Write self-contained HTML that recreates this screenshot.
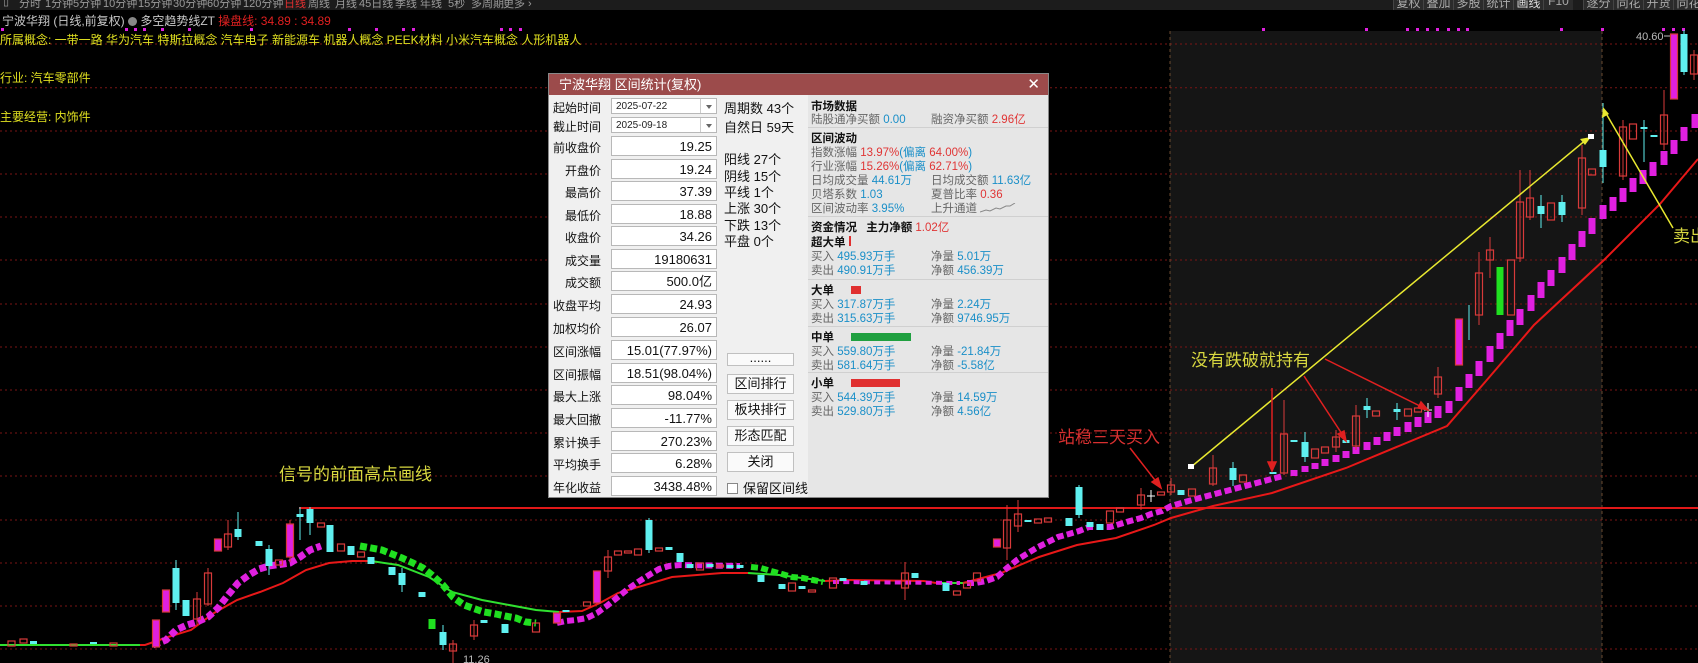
<!DOCTYPE html>
<html><head><meta charset="utf-8">
<style>
*{margin:0;padding:0;box-sizing:border-box}
body{width:1698px;height:663px;background:#000;overflow:hidden;position:relative;font-family:"Liberation Sans","Noto Sans CJK SC",sans-serif}
.a{position:absolute;white-space:nowrap}
#top{position:absolute;left:0;top:0;width:1698px;height:10px;background:#1c1c1c;overflow:hidden}
#top span{position:absolute;top:-5px;font-size:11px;color:#9a9a9a}
.tb{position:absolute;top:0;height:10px;background:#2b2b2b;border-left:1px solid #444;overflow:hidden;color:#aaa;font-size:12px;text-align:center;width:30px}
.tb i{position:absolute;top:-6px;left:0;right:0;font-style:normal}
#dlg{position:absolute;left:548px;top:73px;width:501px;height:425px;background:#f0f0f0;border:1px solid #888}
#dt{position:absolute;left:0;top:0;width:100%;height:21px;background:#9c4b4b;color:#fff;font-size:13px;line-height:21px;padding-left:10px}
#dt b{position:absolute;right:8px;top:0;font-weight:normal;font-size:15px}
.lb{position:absolute;left:2px;width:50px;text-align:right;font-size:12px;color:#111}
.bx{position:absolute;left:62px;width:106px;height:20px;background:#fff;border:1px solid #b8b8b8;font-size:13px;text-align:right;padding-right:4px;line-height:19px;color:#111}
.dd{position:absolute;left:62px;width:106px;height:16px;background:#fff;border:1px solid #b8b8b8;font-size:10px;line-height:15px;padding-left:4px;color:#222}
.dd:after{content:"";position:absolute;right:0;top:0;width:15px;height:14px;border-left:1px solid #ccc}
.dd:before{content:"";position:absolute;right:4px;top:6px;border:3px solid transparent;border-top:4px solid #666;z-index:1}
.mc{position:absolute;left:175px;font-size:13px;color:#111}
.bt{position:absolute;left:178px;width:67px;height:20px;background:#fafafa;border:1px solid #c0c0c0;font-size:13px;text-align:center;line-height:18px;color:#111}
#rp{position:absolute;left:259px;top:21px;width:240px;height:402px;background:#e6e6e6}
#rp .a{font-size:11.5px;color:#666}
#rp .h{color:#111;font-weight:bold}
.bl{color:#1a8fc8}.rd{color:#e03535}
.sep{position:absolute;left:0;width:240px;height:1px;background:#d0d0d0}
</style></head><body>
<svg width="1698" height="663" viewBox="0 0 1698 663" style="position:absolute;left:0;top:0">
<rect x="1170" y="31" width="432" height="632" fill="#151515"/>
<g stroke="#7a1515" stroke-width="1" stroke-dasharray="2 3">
<line x1="0" y1="44" x2="1698" y2="44"/><line x1="0" y1="87.7" x2="1698" y2="87.7"/><line x1="0" y1="131" x2="1698" y2="131"/><line x1="0" y1="174" x2="1698" y2="174"/><line x1="0" y1="217" x2="1698" y2="217"/><line x1="0" y1="260" x2="1698" y2="260"/><line x1="0" y1="304" x2="1698" y2="304"/><line x1="0" y1="347" x2="1698" y2="347"/><line x1="0" y1="390" x2="1698" y2="390"/><line x1="0" y1="433" x2="1698" y2="433"/><line x1="0" y1="476" x2="1698" y2="476"/><line x1="0" y1="520" x2="1698" y2="520"/><line x1="0" y1="563" x2="1698" y2="563"/><line x1="0" y1="606" x2="1698" y2="606"/><line x1="0" y1="649" x2="1698" y2="649"/>
</g>
<g stroke="#6a4a30" stroke-dasharray="3 3"><line x1="1170" y1="31" x2="1170" y2="663"/><line x1="1602" y1="31" x2="1602" y2="663"/></g>
<g fill="#e020e0">
<rect x="1" y="28" width="3" height="3"/><rect x="125" y="28" width="3" height="3"/><rect x="134" y="28" width="3" height="3"/><rect x="143" y="28" width="3" height="3"/><rect x="161" y="28" width="3" height="3"/><rect x="188" y="28" width="3" height="3"/><rect x="250" y="28" width="3" height="3"/><rect x="348" y="28" width="3" height="3"/><rect x="375" y="28" width="3" height="3"/><rect x="402" y="28" width="3" height="3"/><rect x="412" y="28" width="3" height="3"/><rect x="500" y="28" width="3" height="3"/><rect x="509" y="28" width="3" height="3"/><rect x="519" y="28" width="3" height="3"/><rect x="1262" y="28" width="3" height="3"/><rect x="1365" y="28" width="3" height="3"/><rect x="1406" y="28" width="3" height="3"/><rect x="1416" y="28" width="3" height="3"/><rect x="1426" y="28" width="3" height="3"/><rect x="1436" y="28" width="3" height="3"/><rect x="1447" y="28" width="3" height="3"/><rect x="1457" y="28" width="3" height="3"/><rect x="1466" y="28" width="3" height="3"/><rect x="1560" y="28" width="3" height="3"/><rect x="1601" y="28" width="3" height="3"/><rect x="1662" y="28" width="3" height="3"/><rect x="1672" y="28" width="3" height="3"/><rect x="1682" y="28" width="3" height="3"/>
</g>
<line x1="299" y1="508" x2="1698" y2="508" stroke="#e01818" stroke-width="2"/>
<polyline fill="none" stroke="#e81818" stroke-width="2" points="0,645 145,645 168,637 191,630 214,613 237,600 260,592 283,583 306,570 329,563 352,561 371,561"/>
<polyline fill="none" stroke="#30e030" stroke-width="2" points="371,561 398,565 429,577 452,592 482,600 536,610 559,612"/>
<polyline fill="none" stroke="#e81818" stroke-width="2" points="559,612 582,611 600,603 618,593 672,577 722,573 748,573"/>
<polyline fill="none" stroke="#30e030" stroke-width="2" points="748,573 779,575 825,581"/>
<polyline fill="none" stroke="#e81818" stroke-width="2" points="825,581 848,580 924,581 936,583"/>
<polyline fill="none" stroke="#30e030" stroke-width="2" points="936,583 963,583"/>
<polyline fill="none" stroke="#e81818" stroke-width="2" points="963,583 1001,573 1039,557 1077,545 1116,538 1154,525 1171,518 1213,506 1272,493 1346,468 1447,426 1486,381 1534,325 1604,260 1660,204 1698,159"/>
<polyline fill="none" stroke="#30e030" stroke-width="2" points="0,645 140,645"/>
<polyline fill="none" stroke="#e020e0" stroke-width="7" stroke-dasharray="7 3.3" points="153,645 166,640 176,630 187,625 197,622 208,617 218,608 228,595 238,583 249,575 259,569 269,566 290,563 300,557 310,550 321,546"/>
<polyline fill="none" stroke="#20e020" stroke-width="7" stroke-dasharray="7 3.3" points="360,546 382,550 392,554 402,558 413,563 423,568 432,575 443,585 453,597 464,605 475,609 484,612 496,614 505,616 516,618 526,622 536,623"/>
<polyline fill="none" stroke="#e020e0" stroke-width="6" stroke-dasharray="7 3.3" points="557,623 566,621 576,620 587,618 597,613 608,605 618,597 628,589 638,582 649,575 659,569 669,566 680,565 740,566"/>
<polyline fill="none" stroke="#20e020" stroke-width="6" stroke-dasharray="7 3.3" points="751,567 761,568 771,571 782,574 792,577 803,578 813,580 823,582"/>
<polyline fill="none" stroke="#e020e0" stroke-width="4" stroke-dasharray="6 4.3" points="833,582 960,583"/>
<polyline fill="none" stroke="#e020e0" stroke-width="6" stroke-dasharray="7 3.3" points="967,583 976,583 986,581 997,577 1007,568 1017,560 1028,553 1038,547 1048,542 1058,537 1069,534 1079,531 1089,527 1100,527 1110,527 1120,524 1130,521 1141,518 1151,514 1162,511 1171,506 1192,500 1230,490 1283,476"/>
<g fill="#e020e0">
<rect x="1290.5" y="470" width="7" height="6"/><rect x="1301.5" y="466" width="7" height="6"/><rect x="1311.5" y="463" width="7" height="6"/><rect x="1321.5" y="459" width="7" height="7"/><rect x="1332.5" y="455" width="7" height="7"/><rect x="1342.5" y="451" width="7" height="7"/><rect x="1352.5" y="447" width="7" height="7"/><rect x="1363.5" y="442" width="7" height="8"/><rect x="1373.5" y="437" width="7" height="8"/><rect x="1383.5" y="432" width="7" height="9"/><rect x="1393.5" y="427" width="7" height="9"/><rect x="1404.5" y="422" width="7" height="10"/><rect x="1414.5" y="417" width="7" height="10"/><rect x="1424.5" y="412" width="7" height="11"/><rect x="1434.5" y="406" width="7" height="12"/><rect x="1445.5" y="401" width="7" height="12"/><rect x="1455.5" y="387" width="7" height="14"/><rect x="1465.5" y="374" width="7" height="14"/><rect x="1475.5" y="361" width="7" height="15"/><rect x="1486.5" y="346" width="7" height="16"/><rect x="1496.5" y="333" width="7" height="16"/><rect x="1506.5" y="320" width="7" height="16"/><rect x="1516.5" y="309" width="7" height="16"/><rect x="1527.5" y="295" width="7" height="16"/><rect x="1537.5" y="282" width="7" height="16"/><rect x="1547.5" y="270" width="7" height="16"/><rect x="1558.5" y="257" width="7" height="16"/><rect x="1568.5" y="244" width="7" height="16"/><rect x="1578.5" y="231" width="7" height="16"/><rect x="1588.5" y="218" width="7" height="16"/><rect x="1599.5" y="205" width="7" height="14"/><rect x="1609.5" y="197" width="7" height="14"/><rect x="1619.5" y="188" width="7" height="14"/><rect x="1629.5" y="178" width="7" height="14"/><rect x="1639.5" y="170" width="7" height="14"/><rect x="1649.5" y="162" width="7" height="14"/><rect x="1660.5" y="151" width="7" height="14"/><rect x="1670.5" y="140" width="7" height="14"/><rect x="1680.5" y="127" width="7" height="14"/><rect x="1691.5" y="114" width="7" height="14"/>
</g>
<path stroke="#d83a3a" stroke-width="1" fill="none" d="M197 592V625M208 568V606M228 520V550M290 520V562M453 640V663M474 620V640M608 550V578M905 562V600M1007 505V560M1018 500V532M1284 400V475M1356 405V450M1438 367V398M1479 252V325M1490 237V278M1520 170V262M1530 170V220M1582 145V215M1623 120V180M1664 90V150M1694 50V80M1213 455V486M1141 488V510M1171 478V495M1336 430V452"/>
<path stroke="#5ff0f0" stroke-width="1" fill="none" d="M176 560V610M238 512V540M300 507V540M310 507V535M443 625V650M649 518V553M1079 485V518M1469 305V340M1541 195V228M1603 103V183M1644 120V162M1684 30V75M1305 432V462M1233 462V486M1367 398V418M1397 403V420M1562 195V222M402 568V592M269 545V575"/>
<g fill="none" stroke="#d83a3a" stroke-width="1.2">
<rect x="193.5" y="599" width="7" height="20"/><rect x="204.5" y="573" width="7" height="31"/><rect x="224.5" y="534" width="7" height="13"/><rect x="275.5" y="560" width="7" height="5"/><rect x="317.5" y="523" width="7" height="4"/><rect x="337.5" y="544" width="7" height="7"/><rect x="357.5" y="552" width="7" height="5"/><rect x="449.5" y="644" width="7" height="7"/><rect x="470.5" y="625" width="7" height="11"/><rect x="532.5" y="623" width="7" height="9"/><rect x="583.5" y="602" width="7" height="4"/><rect x="604.5" y="557" width="7" height="14"/><rect x="614.5" y="551" width="7" height="4"/><rect x="624.5" y="551" width="7" height="2"/><rect x="634.5" y="549" width="7" height="6"/><rect x="655.5" y="548" width="7" height="3"/><rect x="696.5" y="563" width="7" height="7"/><rect x="716.5" y="565" width="7" height="2"/><rect x="788.5" y="583" width="7" height="8"/><rect x="808.5" y="590" width="7" height="2"/><rect x="829.5" y="578" width="7" height="10"/><rect x="901.5" y="573" width="7" height="15"/><rect x="953.5" y="591" width="7" height="4"/><rect x="963.5" y="583" width="7" height="5"/><rect x="973.5" y="573" width="7" height="8"/><rect x="1003.5" y="520" width="7" height="28"/><rect x="1014.5" y="514" width="7" height="12"/><rect x="1034.5" y="519" width="7" height="4"/><rect x="1044.5" y="518" width="7" height="4"/><rect x="1106.5" y="511" width="7" height="12"/><rect x="1116.5" y="508" width="7" height="4"/><rect x="1137.5" y="495" width="7" height="10"/><rect x="1157.5" y="492" width="7" height="3"/><rect x="1167.5" y="485" width="7" height="7"/><rect x="1188.5" y="489" width="7" height="7"/><rect x="1209.5" y="468" width="7" height="16"/><rect x="1239.5" y="475" width="7" height="7"/><rect x="1280.5" y="434" width="7" height="39"/><rect x="1311.5" y="449" width="7" height="9"/><rect x="1321.5" y="447" width="7" height="6"/><rect x="1332.5" y="437" width="7" height="10"/><rect x="1352.5" y="416" width="7" height="30"/><rect x="1372.5" y="411" width="7" height="5"/><rect x="1404.5" y="409" width="7" height="7"/><rect x="1414.5" y="408" width="7" height="4"/><rect x="1434.5" y="377" width="7" height="17"/><rect x="1475.5" y="273" width="7" height="42"/><rect x="1486.5" y="250" width="7" height="10"/><rect x="1507.5" y="260" width="7" height="55"/><rect x="1516.5" y="202" width="7" height="56"/><rect x="1526.5" y="198" width="7" height="19"/><rect x="1547.5" y="203" width="7" height="17"/><rect x="1578.5" y="158" width="7" height="50"/><rect x="1588.5" y="169" width="7" height="6"/><rect x="1619.5" y="127" width="7" height="49"/><rect x="1629.5" y="124" width="7" height="15"/><rect x="1660.5" y="115" width="7" height="29"/><rect x="1690.5" y="55" width="7" height="19"/>
<rect x="8" y="641" width="7" height="5"/><rect x="20" y="639" width="7" height="4"/><rect x="70" y="644" width="7" height="2"/><rect x="110" y="643" width="7" height="3"/>
</g>
<g fill="#e020e0" stroke="#d83a3a" stroke-width="1.2">
<rect x="152.5" y="620" width="7" height="27"/><rect x="162.5" y="590" width="7" height="22"/><rect x="214.5" y="539" width="7" height="12"/><rect x="286.5" y="524" width="7" height="33"/><rect x="553.5" y="613" width="7" height="10"/><rect x="593.5" y="571" width="7" height="32"/><rect x="993.5" y="539" width="7" height="8"/><rect x="1455.5" y="319" width="7" height="46"/><rect x="1670.5" y="34" width="7" height="65"/>
</g>
<g fill="#5ff0f0">
<rect x="172.5" y="568" width="7" height="35"/><rect x="182.5" y="600" width="7" height="16"/><rect x="234.5" y="529" width="7" height="8"/><rect x="255.5" y="541" width="7" height="5"/><rect x="265.5" y="549" width="7" height="17"/><rect x="296.5" y="514" width="7" height="3"/><rect x="306.5" y="509" width="7" height="14"/><rect x="326.5" y="525" width="7" height="27"/><rect x="347.5" y="546" width="7" height="9"/><rect x="367.5" y="557" width="7" height="7"/><rect x="388.5" y="567" width="7" height="8"/><rect x="398.5" y="573" width="7" height="12"/><rect x="418.5" y="592" width="7" height="5"/><rect x="439.5" y="632" width="7" height="13"/><rect x="480.5" y="620" width="7" height="3"/><rect x="501.5" y="624" width="7" height="9"/><rect x="562.5" y="610" width="7" height="2"/><rect x="645.5" y="520" width="7" height="30"/><rect x="665.5" y="547" width="7" height="3"/><rect x="676.5" y="553" width="7" height="9"/><rect x="686.5" y="564" width="7" height="4"/><rect x="706.5" y="564" width="7" height="3"/><rect x="726.5" y="565" width="7" height="3"/><rect x="736.5" y="565" width="7" height="3"/><rect x="757.5" y="575" width="7" height="7"/><rect x="778.5" y="584" width="7" height="5"/><rect x="798.5" y="586" width="7" height="3"/><rect x="839.5" y="578" width="7" height="3"/><rect x="860.5" y="581" width="7" height="4"/><rect x="911.5" y="573" width="7" height="5"/><rect x="942.5" y="583" width="7" height="8"/><rect x="1024.5" y="520" width="7" height="2"/><rect x="1065.5" y="518" width="7" height="8"/><rect x="1075.5" y="487" width="7" height="28"/><rect x="1086.5" y="522" width="7" height="5"/><rect x="1096.5" y="524" width="7" height="6"/><rect x="1177.5" y="490" width="7" height="5"/><rect x="1229.5" y="468" width="7" height="12"/><rect x="1269.5" y="472" width="7" height="2"/><rect x="1290.5" y="440" width="7" height="2"/><rect x="1301.5" y="442" width="7" height="15"/><rect x="1342.5" y="440" width="7" height="3"/><rect x="1363.5" y="406" width="7" height="4"/><rect x="1393.5" y="409" width="7" height="3"/><rect x="1537.5" y="206" width="7" height="8"/><rect x="1558.5" y="202" width="7" height="13"/><rect x="1599.5" y="150" width="7" height="17"/><rect x="1640.5" y="127" width="7" height="2"/><rect x="1650.5" y="135" width="7" height="2"/><rect x="1680.5" y="34" width="7" height="38"/>
<rect x="30" y="641" width="7" height="3"/><rect x="90" y="642" width="7" height="2"/>
</g>
<g fill="#20e020"><rect x="428.5" y="619" width="7" height="10"/><rect x="1496.5" y="267" width="7" height="48"/></g>
<path stroke="#fff" d="M1151 490V502M1147 496H1155M1428 403V417M1424 410H1432"/>
<line x1="1191" y1="467" x2="1587" y2="139" stroke="#e8e830" stroke-width="1.5"/>
<path d="M1591 137 L1580 139 L1585 145 Z" fill="#e8e830"/>
<rect x="1188" y="464" width="6" height="5" fill="#fff"/>
<rect x="1588" y="134" width="6" height="5" fill="#fff"/>
<line x1="1604" y1="110" x2="1673" y2="228" stroke="#e8e830" stroke-width="1.5"/>
<path d="M1603 107 L1602 118 L1609 114 Z" fill="#e8e830"/>
<g stroke="#e02020" stroke-width="1.5" fill="#e02020">
<line x1="1304" y1="376" x2="1344" y2="437"/><path d="M1346 441 L1338 434 L1344 431 Z"/>
<line x1="1325" y1="359" x2="1424" y2="408"/><path d="M1428 410 L1418 408 L1421 402 Z"/>
<line x1="1272" y1="388" x2="1272" y2="466"/><path d="M1272 471 L1268 462 L1276 462 Z"/>
<line x1="1130" y1="448" x2="1158" y2="484"/><path d="M1161 488 L1152 482 L1158 478 Z"/>
</g>
<text x="279" y="480" font-size="17" fill="#d8d840" font-family="Liberation Sans,Noto Sans CJK SC,sans-serif">信号的前面高点画线</text>
<text x="1191" y="366" font-size="17" fill="#d8d840" font-family="Liberation Sans,Noto Sans CJK SC,sans-serif">没有跌破就持有</text>
<text x="1058" y="443" font-size="17" fill="#d83030" font-family="Liberation Sans,Noto Sans CJK SC,sans-serif">站稳三天买入</text>
<text x="1673" y="242" font-size="17" fill="#d8d840" font-family="Liberation Sans,Noto Sans CJK SC,sans-serif">卖出</text>
<text x="1636" y="40" font-size="11" fill="#bbb" font-family="Liberation Sans,sans-serif">40.60</text>
<line x1="1664" y1="36" x2="1670" y2="36" stroke="#bbb"/>
<text x="463" y="663" font-size="11" fill="#bbb" font-family="Liberation Sans,sans-serif">11.26</text>
</svg>

<div id="top">
<span style="left:3px">▯</span><span style="left:19px">分时</span><span style="left:45px">1分钟</span><span style="left:73px">5分钟</span><span style="left:103px">10分钟</span><span style="left:138px">15分钟</span><span style="left:173px">30分钟</span><span style="left:207px">60分钟</span><span style="left:243px">120分钟</span><span style="left:284px;color:#e03030">日线</span><span style="left:308px">周线</span><span style="left:335px">月线</span><span style="left:359px">45日线</span><span style="left:395px">季线</span><span style="left:420px">年线</span><span style="left:448px">5秒</span><span style="left:471px">多周期</span><span style="left:503px">更多 ›</span>
<div class="tb" style="left:1393px"><i>复权</i></div><div class="tb" style="left:1423px"><i>叠加</i></div><div class="tb" style="left:1453px"><i>多股</i></div><div class="tb" style="left:1483px"><i>统计</i></div><div class="tb" style="left:1513px;color:#ddd"><i>画线</i></div><div class="tb" style="left:1543px"><i>F10</i></div><div class="tb" style="left:1583px"><i>逐分</i></div><div class="tb" style="left:1613px"><i>同花</i></div><div class="tb" style="left:1643px"><i>开货</i></div><div class="tb" style="left:1673px"><i>同花</i></div>
</div>
<div class="a" style="left:2px;top:12px;font-size:12px;color:#c8c8c8">宁波华翔 (日线,前复权) <span style="display:inline-block;width:9px;height:9px;border-radius:50%;background:#888;vertical-align:-1px"></span> 多空趋势线ZT <span style="color:#e02020">操盘线: 34.89 : 34.89</span></div>
<div class="a" style="left:0;top:31px;font-size:12px;color:#e0e020">所属概念: 一带一路 华为汽车 特斯拉概念 汽车电子 新能源车 机器人概念 PEEK材料 小米汽车概念 人形机器人</div>
<div class="a" style="left:0;top:69px;font-size:12px;color:#e0e020">行业: 汽车零部件</div>
<div class="a" style="left:0;top:108px;font-size:12px;color:#e0e020">主要经营: 内饰件</div>

<div id="dlg">
<div id="dt">宁波华翔 区间统计(复权)<b>✕</b></div>
<div class="lb" style="top:25px">起始时间</div><div class="dd" style="top:24px">2025-07-22</div>
<div class="lb" style="top:44px">截止时间</div><div class="dd" style="top:43px">2025-09-18</div>
<div class="lb" style="top:65px">前收盘价</div><div class="bx" style="top:62px">19.25</div>
<div class="lb" style="top:88px">开盘价</div><div class="bx" style="top:85px">19.24</div>
<div class="lb" style="top:110px">最高价</div><div class="bx" style="top:107px">37.39</div>
<div class="lb" style="top:133px">最低价</div><div class="bx" style="top:130px">18.88</div>
<div class="lb" style="top:155px">收盘价</div><div class="bx" style="top:152px">34.26</div>
<div class="lb" style="top:178px">成交量</div><div class="bx" style="top:175px">19180631</div>
<div class="lb" style="top:200px">成交额</div><div class="bx" style="top:197px">500.0亿</div>
<div class="lb" style="top:223px">收盘平均</div><div class="bx" style="top:220px">24.93</div>
<div class="lb" style="top:246px">加权均价</div><div class="bx" style="top:243px">26.07</div>
<div class="lb" style="top:269px">区间涨幅</div><div class="bx" style="top:266px">15.01(77.97%)</div>
<div class="lb" style="top:292px">区间振幅</div><div class="bx" style="top:289px">18.51(98.04%)</div>
<div class="lb" style="top:314px">最大上涨</div><div class="bx" style="top:311px">98.04%</div>
<div class="lb" style="top:337px">最大回撤</div><div class="bx" style="top:334px">-11.77%</div>
<div class="lb" style="top:360px">累计换手</div><div class="bx" style="top:357px">270.23%</div>
<div class="lb" style="top:382px">平均换手</div><div class="bx" style="top:379px">6.28%</div>
<div class="lb" style="top:405px">年化收益</div><div class="bx" style="top:402px">3438.48%</div>
<div class="mc" style="top:24px">周期数 43个</div>
<div class="mc" style="top:43px">自然日 59天</div>
<div class="mc" style="top:75px">阳线 27个</div>
<div class="mc" style="top:92px">阴线 15个</div>
<div class="mc" style="top:108px">平线 1个</div>
<div class="mc" style="top:124px">上涨 30个</div>
<div class="mc" style="top:141px">下跌 13个</div>
<div class="mc" style="top:157px">平盘 0个</div>
<div class="bt" style="top:279px;height:13px;line-height:8px">......</div>
<div class="bt" style="top:300px">区间排行</div>
<div class="bt" style="top:326px">板块排行</div>
<div class="bt" style="top:352px">形态匹配</div>
<div class="bt" style="top:378px">关闭</div>
<div class="a" style="left:178px;top:404px;font-size:13px;color:#111"><span style="display:inline-block;width:11px;height:11px;border:1px solid #888;background:#fff;vertical-align:-1px;margin-right:5px"></span>保留区间线</div>
<div id="rp">
<div class="a h" style="left:3px;top:3px">市场数据</div>
<div class="a" style="left:3px;top:16px">陆股通净买额 <span class="bl">0.00</span></div>
<div class="a" style="left:123px;top:16px">融资净买额 <span class="rd">2.96亿</span></div>
<div class="sep" style="top:32px"></div>
<div class="a h" style="left:3px;top:35px">区间波动</div>
<div class="a" style="left:3px;top:49px">指数涨幅 <span class="rd">13.97%</span><span class="bl">(偏离 </span><span class="rd">64.00%</span><span class="bl">)</span></div>
<div class="a" style="left:3px;top:63px">行业涨幅 <span class="rd">15.26%</span><span class="bl">(偏离 </span><span class="rd">62.71%</span><span class="bl">)</span></div>
<div class="a" style="left:3px;top:77px">日均成交量 <span class="bl">44.61万</span></div>
<div class="a" style="left:123px;top:77px">日均成交额 <span class="bl">11.63亿</span></div>
<div class="a" style="left:3px;top:91px">贝塔系数 <span class="bl">1.03</span></div>
<div class="a" style="left:123px;top:91px">夏普比率 <span class="rd">0.36</span></div>
<div class="a" style="left:3px;top:105px">区间波动率 <span class="bl">3.95%</span></div>
<div class="a" style="left:123px;top:105px">上升通道 <svg width="36" height="10" style="vertical-align:-1px"><path d="M0 9 L6 7 L10 8 L16 5 L20 6 L26 3 L30 3 L35 0" stroke="#888" fill="none"/></svg></div>
<div class="sep" style="top:121px"></div>
<div class="a h" style="left:3px;top:124px">资金情况 <span style="margin-left:6px">主力净额</span> <span class="rd" style="font-weight:normal">1.02亿</span></div>
<div class="a h" style="left:3px;top:139px">超大单 <span style="display:inline-block;width:2px;height:10px;background:#e03030"></span></div>
<div class="a" style="left:3px;top:153px">买入 <span class="bl">495.93万手</span></div>
<div class="a" style="left:123px;top:153px">净量 <span class="bl">5.01万</span></div>
<div class="a" style="left:3px;top:167px">卖出 <span class="bl">490.91万手</span></div>
<div class="a" style="left:123px;top:167px">净额 <span class="bl">456.39万</span></div>
<div class="sep" style="top:184px"></div>
<div class="a h" style="left:3px;top:187px">大单 <span style="display:inline-block;width:10px;height:8px;background:#e03030;margin-left:14px"></span></div>
<div class="a" style="left:3px;top:201px">买入 <span class="bl">317.87万手</span></div>
<div class="a" style="left:123px;top:201px">净量 <span class="bl">2.24万</span></div>
<div class="a" style="left:3px;top:215px">卖出 <span class="bl">315.63万手</span></div>
<div class="a" style="left:123px;top:215px">净额 <span class="bl">9746.95万</span></div>
<div class="sep" style="top:231px"></div>
<div class="a h" style="left:3px;top:234px">中单 <span style="display:inline-block;width:60px;height:8px;background:#20a040;margin-left:14px"></span></div>
<div class="a" style="left:3px;top:248px">买入 <span class="bl">559.80万手</span></div>
<div class="a" style="left:123px;top:248px">净量 <span class="bl">-21.84万</span></div>
<div class="a" style="left:3px;top:262px">卖出 <span class="bl">581.64万手</span></div>
<div class="a" style="left:123px;top:262px">净额 <span class="bl">-5.58亿</span></div>
<div class="sep" style="top:277px"></div>
<div class="a h" style="left:3px;top:280px">小单 <span style="display:inline-block;width:49px;height:8px;background:#e03030;margin-left:14px"></span></div>
<div class="a" style="left:3px;top:294px">买入 <span class="bl">544.39万手</span></div>
<div class="a" style="left:123px;top:294px">净量 <span class="bl">14.59万</span></div>
<div class="a" style="left:3px;top:308px">卖出 <span class="bl">529.80万手</span></div>
<div class="a" style="left:123px;top:308px">净额 <span class="bl">4.56亿</span></div>
</div>
</div>
</body></html>
